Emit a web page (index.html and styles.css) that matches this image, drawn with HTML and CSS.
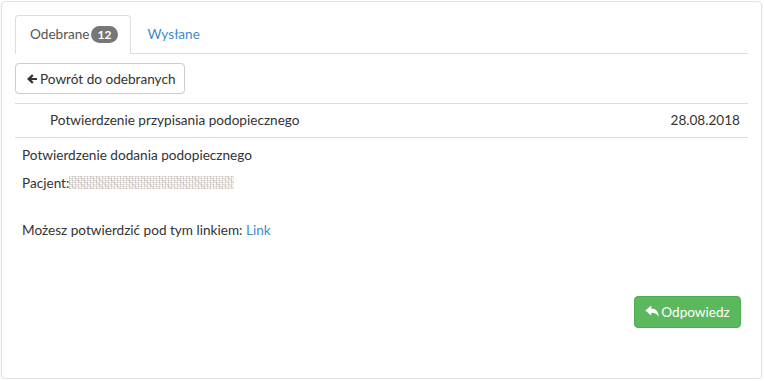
FILE: index.html
```html
<!DOCTYPE html>
<html lang="pl">
<head>
  <meta charset="UTF-8" />
  <meta name="viewport" content="width=device-width, initial-scale=1" />
  <title>Wiadomości</title>
  <link rel="stylesheet" href="styles.css">
</head>
<body>

  <div class="panel">
    <ul class="tabs">
      <li class="tab active">Odebrane<span class="badge">12</span></li>
      <li class="tab"><a href="#">Wysłane</a></li>
    </ul>

    <button class="btn-back">
      <svg class="ico" width="12" height="12" viewBox="0 0 12 12"><path d="M1 6 L6 1.2 L7.6 2.8 L5.4 5 H11 V7 H5.4 L7.6 9.2 L6 10.8 Z" fill="#333"/></svg>Powrót do odebranych
    </button>

    <div class="msg-row">
      <span class="msg-title">Potwierdzenie przypisania podopiecznego</span>
      <span class="msg-date">28.08.2018</span>
    </div>

    <div class="msg-body">
      <div class="line">Potwierdzenie dodania podopiecznego</div>
      <div class="line">Pacjent:<span class="hidden-name"></span></div>
      <div class="spacer"></div>
      <div class="line">Możesz potwierdzić pod tym linkiem: <a href="#">Link</a></div>
    </div>

    <div class="actions">
      <button class="btn-reply">
        <svg class="ico" width="14" height="13" viewBox="0 0 13 12"><path d="M0.3 5 L5.8 0.5 V3.1 C10.2 3.1 12.7 6 12.7 11 C11.4 8.4 9.4 7.1 5.8 7.1 V9.6 Z" fill="#fff"/></svg>Odpowiedz
      </button>
    </div>
  </div>

</body>
</html>
```

FILE: styles.css
```css
body {
  margin: 0;
  background: #fff;
  color: #333;
  font-family: Lato, "Open Sans", sans-serif;
  font-size: 13.6px;
}
.panel {
  box-sizing: border-box;
  width: 761px;
  margin: 1px 0 0 1px;
  padding: 13px 13px 50px 13px;
  border: 1px solid #e3e3e3;
  border-radius: 4px;
  box-shadow: 0 1px 2px rgba(0,0,0,0.08);
}
.tabs {
  display: flex;
  list-style: none;
  margin: 0;
  padding: 0;
  border-bottom: 1px solid #ddd;
}
.tab {
  height: 37px;
  line-height: 37px;
  padding: 0 12px 0 14px;
  margin-bottom: -1px;
  border: 1px solid transparent;
  border-radius: 4px 4px 0 0;
  display: flex;
  align-items: center;
}
.tab.active {
  border-color: #ddd;
  border-bottom-color: #fff;
  background: #fff;
  color: #555;
}
.tab a {
  color: #428bca;
  text-decoration: none;
  padding-left: 1px;
}
.badge {
  display: inline-block;
  margin-left: 1px;
  padding: 0 7px;
  height: 17px;
  line-height: 17px;
  border-radius: 9px;
  background: #777;
  color: #fff;
  font-size: 12px;
  font-weight: bold;
}
button {
  font-family: Lato, "Open Sans", sans-serif;
  font-size: 13.6px;
  cursor: pointer;
}
.ico {
  margin-right: 2px;
  vertical-align: -1px;
}
.btn-back {
  display: block;
  margin: 9px 0 0 0;
  height: 31px;
  width: 170px;
  padding: 0 10px;
  white-space: nowrap;
  background: #fff;
  color: #333;
  border: 1px solid #ccc;
  border-radius: 4px;
  text-align: left;
}
.msg-row {
  display: flex;
  justify-content: space-between;
  margin-top: 9px;
  height: 33px;
  line-height: 33px;
  padding: 0 8px 0 35px;
  border-top: 1px solid #ddd;
  border-bottom: 1px solid #ddd;
}
.msg-body {
  padding: 7px 7px 0 7px;
}
.line {
  line-height: 20px;
  margin-bottom: 8px;
}
.spacer {
  height: 19px;
}
.msg-body a {
  color: #428bca;
  text-decoration: none;
}
.hidden-name {
  display: inline-block;
  width: 165px;
  height: 13px;
  vertical-align: -1px;
  background:
    repeating-linear-gradient(90deg, rgba(150,170,200,0.4) 0 1px, transparent 1px 3px),
    repeating-linear-gradient(0deg, rgba(200,170,140,0.3) 0 1px, transparent 1px 2px),
    repeating-linear-gradient(45deg, rgba(120,120,120,0.2) 0 1px, transparent 1px 4px);
}
.actions {
  display: flex;
  justify-content: flex-end;
  padding-right: 7px;
  margin-top: 56px;
}
.btn-reply {
  height: 32px;
  width: 107px;
  padding: 0;
  background: #5cb85c;
  color: #fff;
  border: 1px solid #4cae4c;
  border-radius: 4px;
}
```
